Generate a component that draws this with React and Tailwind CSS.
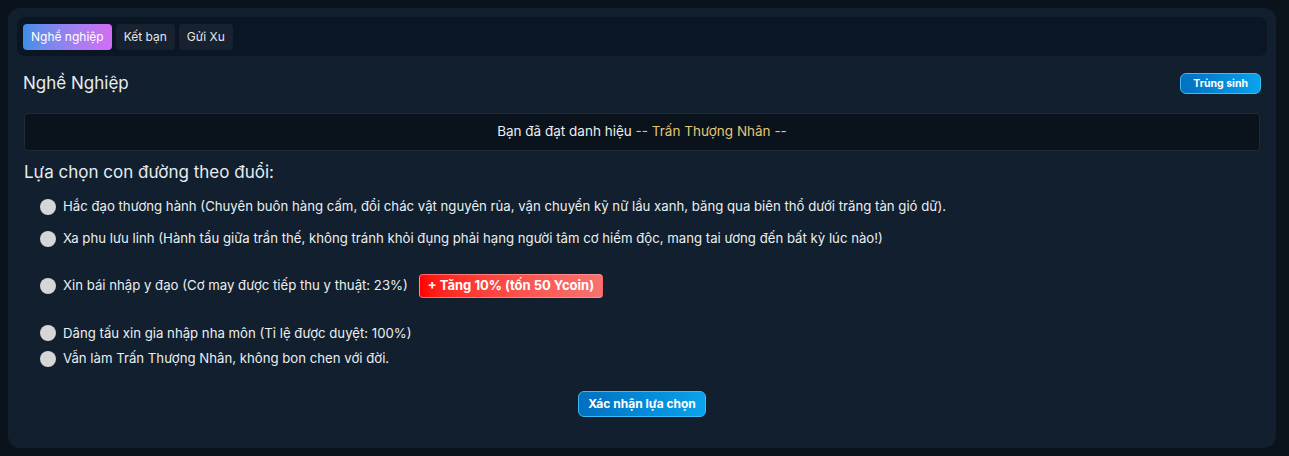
import React, { useState } from 'react';

const tabs = ['Nghề nghiệp', 'Kết bạn', 'Gửi Xu'];

const options = [
  { id: 'hacdao', label: 'Hắc đạo thương hành (Chuyên buôn hàng cấm, đổi chác vật nguyên rủa, vận chuyển kỹ nữ lầu xanh, băng qua biên thổ dưới trăng tàn gió dữ).', cls: 'mt-[12px]' },
  { id: 'xaphu', label: 'Xa phu lưu linh (Hành tẩu giữa trần thế, không tránh khỏi đụng phải hạng người tâm cơ hiểm độc, mang tai ương đến bất kỳ lúc nào!)', cls: 'mt-[12px]' },
  { id: 'ydao', label: 'Xin bái nhập y đạo (Cơ may được tiếp thu y thuật: 23%)', cls: 'mt-[25px]', boost: true },
  { id: 'nhamon', label: 'Dâng tấu xin gia nhập nha môn (Tỉ lệ được duyệt: 100%)', cls: 'mt-[26px]' },
  { id: 'thuongnhan', label: 'Vẫn làm Trấn Thượng Nhân, không bon chen với đời.', cls: 'mt-[6px]' },
];

export default function App() {
  const [tab, setTab] = useState(0);
  const [choice, setChoice] = useState(null);

  return (
    <div className="min-h-[456px] bg-[#0a121b] p-2 font-['Inter','Liberation_Sans',sans-serif]">
      <div className="w-[1268px] h-[440px] rounded-xl bg-[#111f2e] p-[9px]">
        {/* tabs */}
        <div className="flex items-center gap-1 h-[39px] px-[6px] rounded-lg bg-[#0b1625]">
          {tabs.map((t, i) => (
            <button
              key={t}
              onClick={() => setTab(i)}
              className={
                i === tab
                  ? 'h-[26px] px-2 rounded-[4px] text-[12px] text-white bg-gradient-to-r from-[#3b8ee8] to-[#d36cf5]'
                  : 'h-[26px] px-2 rounded-[4px] text-[12px] text-[#e5e7eb] bg-[#17212f]'
              }
            >
              {t}
            </button>
          ))}
        </div>

        <div className="px-[6px]">
          <div className="flex items-center justify-between mt-[15px]">
            <h2 className="text-[17px] text-[#e8ecef]">Nghề Nghiệp</h2>
            <button className="h-[21px] px-3 rounded-[6px] border border-[#38bdf8] bg-gradient-to-r from-[#0270c0] to-[#0ba2ec] text-[10.5px] font-bold text-white">
              Trùng sinh
            </button>
          </div>

          <div className="mt-[16px] mx-px h-[38px] flex items-center justify-center rounded-[4px] border border-[#1f2c38] bg-[#0a121b] text-[13.5px] text-[#eceff1]">
            Bạn đã đạt danh hiệu&nbsp;<span className="text-[#e2c776]">-- Trấn Thượng Nhân --</span>
          </div>

          <h3 className="mt-[9px] ml-px text-[17px] text-[#e8ecef]">Lựa chọn con đường theo đuổi:</h3>

          <div className="pl-[17px] flex flex-col">
            {options.map((o) => (
              <label key={o.id} className={`${o.cls} flex items-center gap-[7px] cursor-pointer`}>
                <span className={`w-4 h-4 rounded-full ${choice === o.id ? 'bg-[#0ea5e9] ring-2 ring-inset ring-[#d4d4d4]' : 'bg-[#d6d6d6]'}`} onClick={() => setChoice(o.id)} />
                <span className="text-[13.2px] text-[#eceff1]" onClick={() => setChoice(o.id)}>{o.label}</span>
                {o.boost && (
                  <span className="ml-1 h-[24px] px-[8px] flex items-center rounded-[4px] border border-[#fca5a5]/60 bg-gradient-to-r from-[#ff0000] to-[#f87171] text-[13px] font-bold text-white">
                    + Tăng 10% (tốn 50 Ycoin)
                  </span>
                )}
              </label>
            ))}
          </div>

          <div className="flex justify-center mt-[22px]">
            <button className="h-[26px] px-[9px] rounded-[6px] border border-[#38bdf8] bg-gradient-to-r from-[#0270c0] to-[#0ba2ec] text-[12px] font-bold text-white">
              Xác nhận lựa chọn
            </button>
          </div>
        </div>
      </div>
    </div>
  );
}
